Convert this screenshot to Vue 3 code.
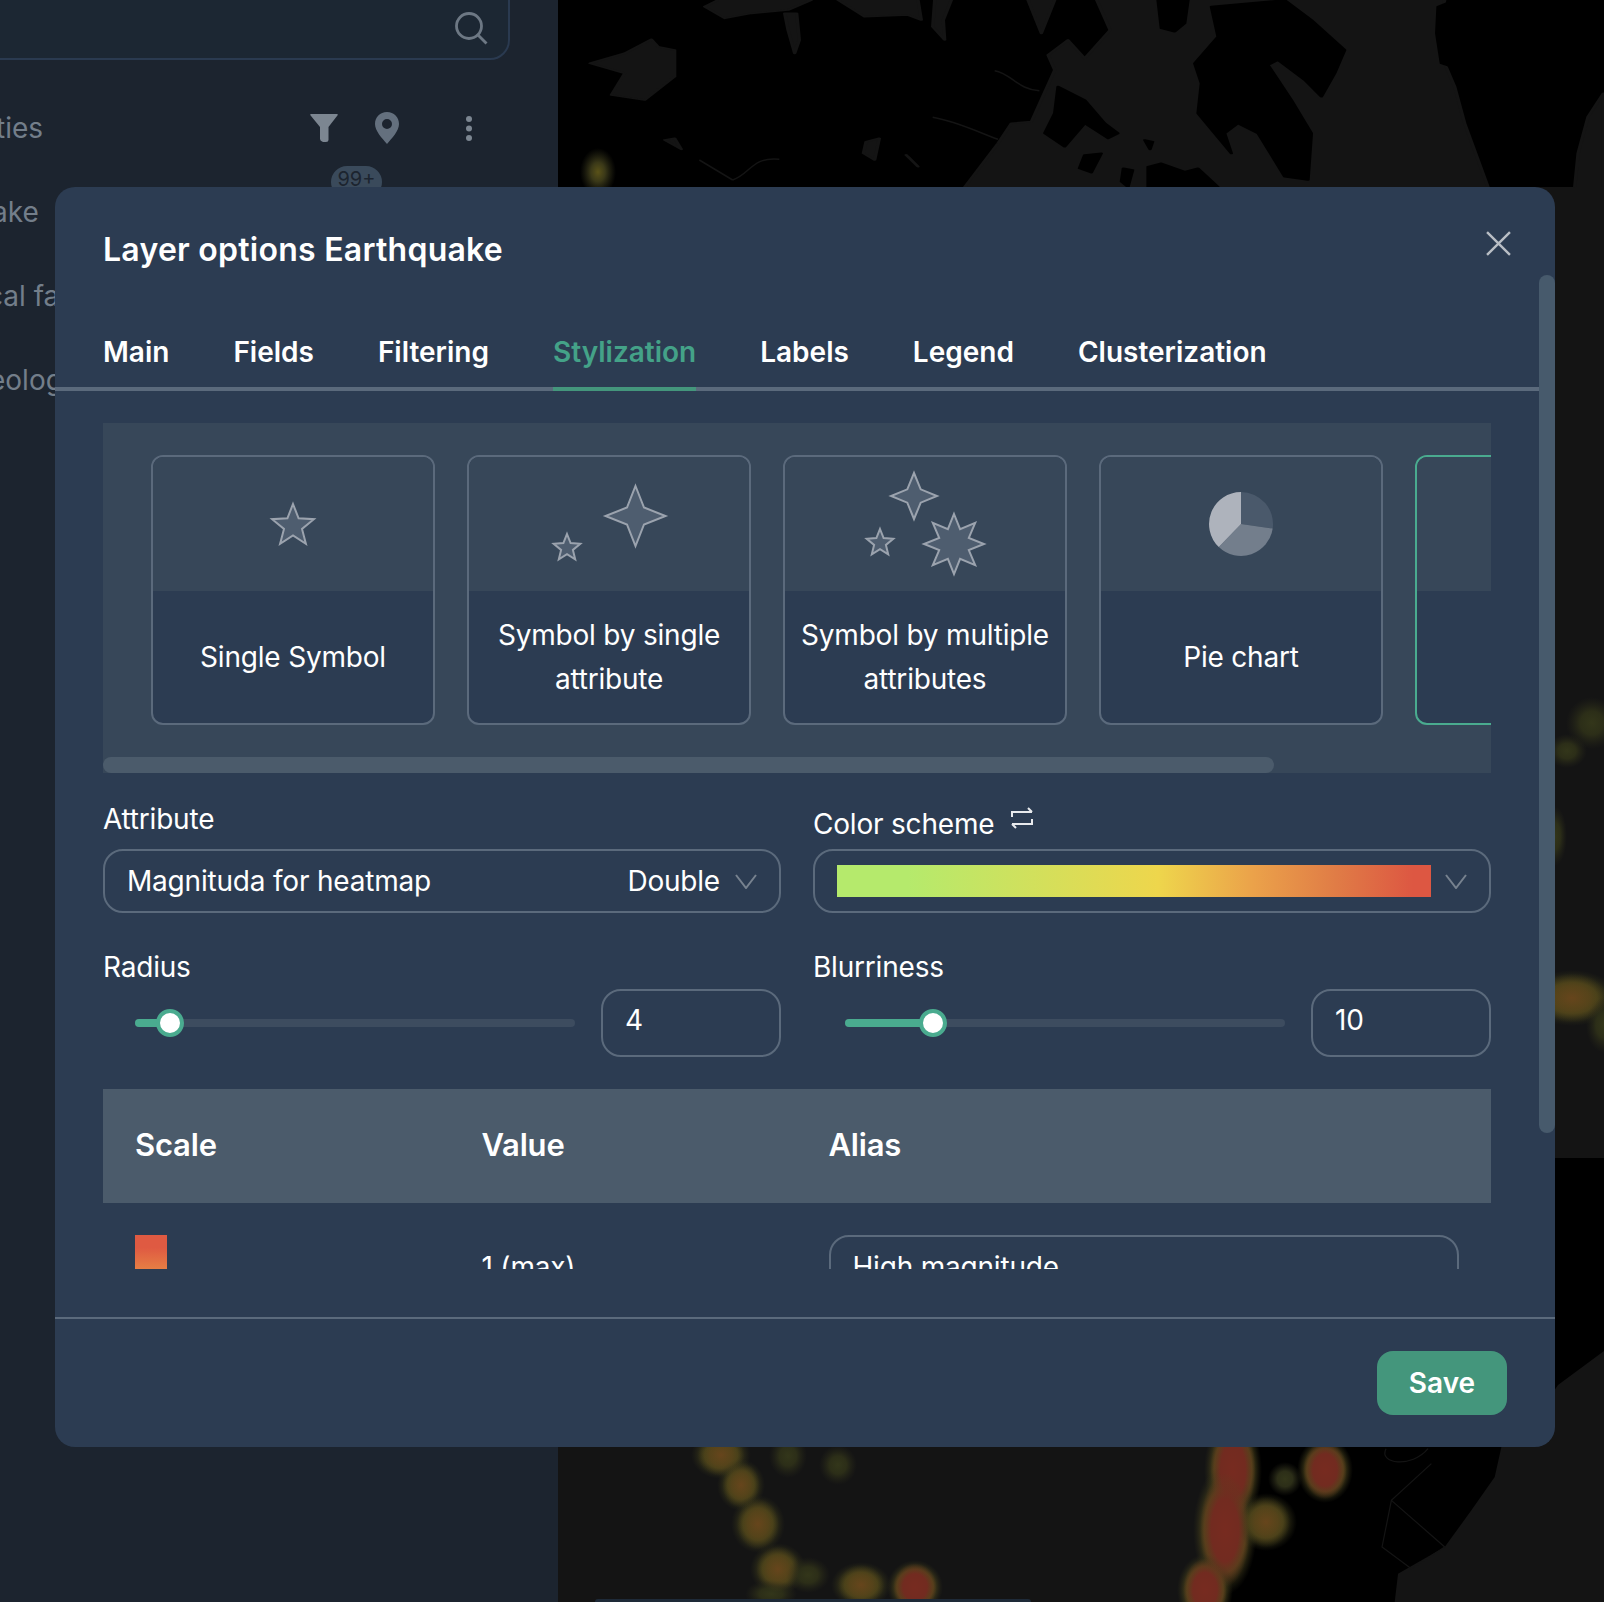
<script setup>
const sideRows = [
  { text: 'ties', shift: -4 },
  { text: 'ake', shift: -8 },
  { text: 'cal fa', shift: -13 },
  { text: 'eology', shift: -11 },
];
const tabs = ['Main', 'Fields', 'Filtering', 'Stylization', 'Labels', 'Legend', 'Clusterization'];

function star(cx, cy, outer, inner, count) {
  const points = [];
  for (let i = 0; i < count * 2; i += 1) {
    const radius = i % 2 === 0 ? outer : inner;
    const angle = (Math.PI * i) / count - Math.PI / 2;
    points.push(`${(cx + radius * Math.cos(angle)).toFixed(1)},${(cy + radius * Math.sin(angle)).toFixed(1)}`);
  }
  return points.join(' ');
}

function slice(cx, cy, radius, from, to) {
  const point = (deg) => {
    const a = ((deg - 90) * Math.PI) / 180;
    return `${(cx + radius * Math.cos(a)).toFixed(1)} ${(cy + radius * Math.sin(a)).toFixed(1)}`;
  };
  const large = to - from > 180 ? 1 : 0;
  return `M${cx} ${cy}L${point(from)}A${radius} ${radius} 0 ${large} 1 ${point(to)}Z`;
}

const cards = [
  { label: 'Single Symbol', stars: [star(139, 69, 22, 9.5, 5)] },
  { label: 'Symbol by single attribute', stars: [star(165.5, 59, 30, 12, 4), star(97, 91, 14, 6.2, 5)] },
  { label: 'Symbol by multiple attributes', stars: [star(128, 39, 23, 9.5, 4), star(94, 86, 14, 6.2, 5), star(168, 87, 30, 16, 8)] },
  {
    label: 'Pie chart',
    pie: [
      { d: slice(139, 67, 32, 0, 98), fill: '#4a596b' },
      { d: slice(139, 67, 32, 98, 224), fill: '#737e8c' },
      { d: slice(139, 67, 32, 224, 360), fill: '#aeb3bc' },
    ],
  },
  { label: '', active: true },
];

const sliders = [
  { label: 'Radius', value: '4', fill: 8 },
  { label: 'Blurriness', value: '10', fill: 20 },
];

// heat spots, in map pixels
const heat = [
  { x: 40, y: 172, rx: 18, ry: 24, level: 'low' },
  { x: 1014, y: 998, rx: 46, ry: 28, level: 'mid' },
  { x: 1009, y: 751, rx: 20, ry: 17, level: 'dim' },
  { x: 1034, y: 723, rx: 26, ry: 26, level: 'dim' },
  { x: 997, y: 836, rx: 12, ry: 30, level: 'dim' },
  { x: 1046, y: 1025, rx: 18, ry: 28, level: 'dim' },
  { x: 163, y: 1455, rx: 30, ry: 24, level: 'mid' },
  { x: 183, y: 1485, rx: 24, ry: 26, level: 'mid' },
  { x: 200, y: 1524, rx: 27, ry: 29, level: 'mid' },
  { x: 220, y: 1569, rx: 28, ry: 26, level: 'mid' },
  { x: 250, y: 1575, rx: 22, ry: 18, level: 'dim' },
  { x: 230, y: 1456, rx: 19, ry: 22, level: 'dim' },
  { x: 280, y: 1465, rx: 19, ry: 20, level: 'dim' },
  { x: 213, y: 1594, rx: 26, ry: 14, level: 'dim' },
  { x: 303, y: 1585, rx: 30, ry: 23, level: 'mid' },
  { x: 357, y: 1587, rx: 28, ry: 27, level: 'hot' },
  { x: 675, y: 1470, rx: 29, ry: 55, level: 'hot' },
  { x: 667, y: 1530, rx: 32, ry: 65, level: 'hot' },
  { x: 647, y: 1590, rx: 28, ry: 36, level: 'hot' },
  { x: 767, y: 1470, rx: 28, ry: 33, level: 'hot' },
  { x: 727, y: 1479, rx: 17, ry: 17, level: 'dim' },
  { x: 708, y: 1522, rx: 31, ry: 29, level: 'mid' },
];

// map is drawn in a 1568x561 box for the top strip and the bottom one
const topGray = [
  'M610 561L660 430L680 370L710 365L745 210L735 165L765 120L790 175L828 90L808 0H1330L1320 100L1330 190L1345 260L1360 370L1395 561Z',
  'M48 190L100 160L140 118L150 140L175 150L175 230L130 300L80 285L100 220Z',
  'M220 20L240 0H380L345 30L290 40L250 55Z',
  'M340 40L358 40L362 120L355 160L345 90Z',
  'M420 0H540L545 60L525 45L460 50Z',
  'M565 0H590L578 60L580 120L562 80Z',
  'M705 0H745L725 100Z',
  'M462 425L482 415L475 480L458 460Z',
  'M160 420L175 415L185 448Z',
  'M1568 280L1545 350L1530 460L1525 561H1568Z',
  'M525 470L540 500L522 465Z',
];
const topBlack = [
  'M900 0H945L940 70L925 95L905 85Z',
  'M980 20L1090 0L1130 60L1180 150L1165 220L1145 290L1120 240L1080 180L1065 195L1100 300L1130 400L1125 540L1090 530L1050 400L1020 370L1000 400L1010 460L960 340L965 250L955 190L990 110Z',
  'M750 260L790 300L820 370L840 400L825 415L790 370L760 440L730 400L745 340Z',
  'M885 500L905 490L940 515L960 505L990 561H885Z',
  'M790 465L815 460L800 518L782 505Z',
  'M848 505L862 510L855 561L845 545Z',
  'M880 420L892 425L888 448Z',
  'M1320 20L1345 0H1360L1350 50L1375 70L1340 200L1325 190L1318 100Z',
];
const topLines = [
  'M655 212C680 220 690 270 722 272',
  'M562 352C600 365 640 405 660 418',
  'M212 480L262 540M262 540C290 520 290 470 332 478',
];
const bottomLines = [
  'M1242 5C1230 50 1280 65 1305 5',
  'M1310 50L1250 160L1236 300L1280 365L1330 300L1250 160',
];
</script>

<template>
  <div class="page">
    <aside class="side">
      <div class="side__search">
        <svg class="side__search-icon" viewBox="0 0 34 34" width="34" height="34" aria-hidden="true">
          <circle cx="15" cy="15" r="12.5" fill="none" stroke="#6d7884" stroke-width="2.8" />
          <path d="M24 24L32.5 32.5" stroke="#6d7884" stroke-width="2.8" fill="none" />
        </svg>
      </div>
      <div v-for="(row, index) in sideRows" :key="row.text" class="side__row">
        <span :style="{ marginLeft: `${row.shift}px` }">{{ row.text }}</span>
        <div v-if="index === 0" class="side__tools">
          <svg viewBox="0 0 28 28" width="28" height="28" aria-hidden="true">
            <path d="M1 0H27Q28.4 0 27.6 1.2L18.5 13V26Q18.5 28 16 28H13Q10 27 10 25V13L0.4 1.2Q-0.4 0 1 0Z" fill="#7c8691" />
          </svg>
          <svg viewBox="0 0 24 32" width="24" height="32" aria-hidden="true">
            <path fill-rule="evenodd" d="M12 0C5 0 0 5 0 12C0 19 7 26 12 32C17 26 24 19 24 12C24 5 19 0 12 0ZM12 7A5 5 0 1 1 12 17A5 5 0 1 1 12 7Z" fill="#64707e" />
          </svg>
          <svg viewBox="0 0 6 25" width="6" height="25" aria-hidden="true">
            <circle cx="3" cy="3" r="3" fill="#7c8691" />
            <circle cx="3" cy="12.5" r="3" fill="#7c8691" />
            <circle cx="3" cy="22" r="3" fill="#7c8691" />
          </svg>
        </div>
      </div>
      <span class="side__badge">99+</span>
    </aside>

    <svg class="map" viewBox="0 0 1046 1602" aria-hidden="true">
      <defs>
        <radialGradient id="halo-low">
          <stop offset="0" stop-color="#5a5218" />
          <stop offset="0.4" stop-color="#3a3818" />
          <stop offset="1" stop-color="#2a2a18" stop-opacity="0" />
        </radialGradient>
        <radialGradient id="halo-dim">
          <stop offset="0" stop-color="#33361a" />
          <stop offset="0.45" stop-color="#2c2e18" />
          <stop offset="1" stop-color="#242418" stop-opacity="0" />
        </radialGradient>
        <radialGradient id="halo-mid">
          <stop offset="0" stop-color="#48441a" />
          <stop offset="0.55" stop-color="#423f19" />
          <stop offset="1" stop-color="#2a2a18" stop-opacity="0" />
        </radialGradient>
        <radialGradient id="halo-hot">
          <stop offset="0" stop-color="#55461b" />
          <stop offset="0.65" stop-color="#4e441a" />
          <stop offset="1" stop-color="#2a2a18" stop-opacity="0" />
        </radialGradient>
        <radialGradient id="core-mid">
          <stop offset="0" stop-color="#6a451c" stop-opacity="0.9" />
          <stop offset="0.5" stop-color="#62461b" stop-opacity="0.6" />
          <stop offset="1" stop-color="#4e441a" stop-opacity="0" />
        </radialGradient>
        <radialGradient id="core-hot">
          <stop offset="0" stop-color="#772b20" />
          <stop offset="0.55" stop-color="#722b20" />
          <stop offset="1" stop-color="#633a1e" stop-opacity="0" />
        </radialGradient>
      </defs>
      <rect width="1046" height="1602" fill="#141414" />
      <rect width="1046" height="187" fill="#000" />
      <path d="M960 1158H1046V1351L1000 1385L985 1407H960Z" fill="#000" />
      <g transform="scale(0.6667 0.3333)" stroke-linejoin="round">
        <path v-for="d in topGray" :key="d" :d="d" fill="#141414" stroke="#141414" stroke-width="5" />
        <path v-for="d in topBlack" :key="d" :d="d" fill="#000" stroke="#000" stroke-width="5" />
        <path v-for="d in topLines" :key="d" :d="d" fill="none" stroke="#141414" stroke-width="1.5" vector-effect="non-scaling-stroke" />
      </g>
      <g transform="translate(0 1447) scale(0.6667 0.3333)">
        <path d="M1000 0H1415L1405 90L1370 190L1330 300L1260 380L1255 465H950L1000 250Z" fill="#000" />
        <path v-for="d in bottomLines" :key="d" :d="d" fill="none" stroke="#141414" stroke-width="1.2" vector-effect="non-scaling-stroke" />
      </g>
      <ellipse
        v-for="blob in heat"
        :key="`halo-${blob.x}-${blob.y}`"
        :cx="blob.x"
        :cy="blob.y"
        :rx="blob.rx"
        :ry="blob.ry"
        :fill="`url(#halo-${blob.level})`"
      />
      <template v-for="blob in heat" :key="`core-${blob.x}-${blob.y}`">
        <ellipse
          v-if="blob.level === 'mid' || blob.level === 'hot'"
          :cx="blob.x"
          :cy="blob.y"
          :rx="blob.rx * 0.78"
          :ry="blob.ry * 0.88"
          :fill="`url(#core-${blob.level})`"
        />
      </template>
      <rect x="37" y="1599" width="436" height="6" rx="3" fill="#1e2a38" />
    </svg>

    <section class="modal">
      <h2 class="modal__title">Layer options Earthquake</h2>
      <svg class="modal__close" viewBox="0 0 24 24" width="25" height="25" aria-hidden="true">
        <path d="M1 1L23 23M23 1L1 23" stroke="#b9bec5" stroke-width="2.3" fill="none" />
      </svg>

      <nav class="tabs">
        <span v-for="tab in tabs" :key="tab" class="tabs__item" :class="{ 'tabs__item--active': tab === 'Stylization' }">{{ tab }}</span>
      </nav>

      <span class="modal__scroll" />

      <div class="modal__body">
        <div class="kinds">
          <div class="kinds__row">
            <article v-for="card in cards" :key="card.label" class="kind" :class="{ 'kind--active': card.active }">
              <div class="kind__art">
                <svg v-if="!card.active" viewBox="-1 0 280 134" width="280" height="134" aria-hidden="true">
                  <polygon
                    v-for="points in card.stars"
                    :key="points"
                    :points="points"
                    fill="#4e5d6f"
                    stroke="#9ba3ae"
                    stroke-width="2"
                  />
                  <path v-for="part in card.pie" :key="part.d" :d="part.d" :fill="part.fill" />
                </svg>
              </div>
              <p class="kind__label">{{ card.label }}</p>
            </article>
          </div>
          <span class="kinds__scroll" />
        </div>

        <div class="fields">
          <div class="field">
            <label class="field__label">Attribute</label>
            <div class="select">
              <span>Magnituda for heatmap</span>
              <span class="select__type">Double</span>
              <svg viewBox="0 0 22 15" width="22" height="15" aria-hidden="true">
                <path d="M1 1L11 14L21 1" fill="none" stroke="#77828f" stroke-width="2" />
              </svg>
            </div>
          </div>
          <div class="field">
            <label class="field__label field__label--icon">
              Color scheme
              <svg viewBox="0 0 24 22" width="24" height="22" aria-hidden="true">
                <path d="M2 10V5H22M18 1L22 5M22 12V17H2M6 21L2 17" fill="none" stroke="#e8eaed" stroke-width="2" />
              </svg>
            </label>
            <div class="select select--scheme">
              <span class="select__ramp" />
              <svg viewBox="0 0 22 15" width="22" height="15" aria-hidden="true">
                <path d="M1 1L11 14L21 1" fill="none" stroke="#77828f" stroke-width="2" />
              </svg>
            </div>
          </div>
          <div v-for="item in sliders" :key="item.label" class="field field--slider">
            <label class="field__label field__label--slider">{{ item.label }}</label>
            <div class="range">
              <div class="range__track">
                <span class="range__fill" :style="{ width: `${item.fill}%` }" />
                <span class="range__thumb" :style="{ left: `${item.fill}%` }" />
              </div>
              <div class="range__input">{{ item.value }}</div>
            </div>
          </div>
        </div>

        <div class="scale">
          <div class="scale__head">
            <span>Scale</span>
            <span>Value</span>
            <span>Alias</span>
          </div>
          <div class="scale__row">
            <span class="scale__swatch" />
            <span class="scale__value">1 (max)</span>
            <div class="scale__input">High magnitude</div>
          </div>
        </div>
      </div>

      <footer class="modal__footer">
        <button class="modal__save" type="button">Save</button>
      </footer>
    </section>
  </div>
</template>

<style>
body {
  background: #141414;
}
</style>

<style scoped>
.page {
  position: relative;
  display: flex;
  width: 1604px;
  height: 1602px;
  overflow: hidden;
  font-family: Inter, "Noto Sans", sans-serif;
  color: #ffffff;
}

.side {
  position: relative;
  flex: 0 0 558px;
  box-sizing: border-box;
  background: #1c242f;
  color: #737e8a;
  font-size: 28px;
  overflow: hidden;
}

.side__search {
  display: flex;
  align-items: center;
  justify-content: flex-end;
  box-sizing: border-box;
  width: 530px;
  height: 81px;
  margin: -21px 0 26px -20px;
  padding-top: 17px;
  padding-right: 20px;
  background: #1c2733;
  border: 2px solid #2a3a50;
  border-radius: 20px;
}

.side__row {
  display: flex;
  align-items: center;
  justify-content: space-between;
  height: 84px;
  padding-right: 86px;
}

.side__tools {
  display: flex;
  align-items: center;
  gap: 37px;
}

.side__tools svg:last-child {
  margin-left: 30px;
}

.side__badge {
  position: absolute;
  left: 331px;
  top: 166px;
  width: 51px;
  height: 32px;
  background: #3a4a5b;
  border-radius: 16px;
  color: #1c242f;
  font-size: 20px;
  line-height: 26px;
  text-align: center;
}

.map {
  flex: 0 0 1046px;
  width: 1046px;
  height: 1602px;
}

.modal {
  position: absolute;
  left: 55px;
  top: 187px;
  display: flex;
  flex-direction: column;
  box-sizing: border-box;
  width: 1500px;
  height: 1260px;
  padding-top: 43px;
  background: #2c3c52;
  border-radius: 20px;
}

.modal__title {
  margin: 0 0 62px 48px;
  font-size: 32px;
  line-height: 40px;
  font-weight: 600;
  letter-spacing: 0.25px;
}

.modal__close {
  position: absolute;
  right: 44px;
  top: 44px;
}

.modal__scroll {
  position: absolute;
  right: 0;
  top: 88px;
  width: 16px;
  height: 858px;
  background: #475a6c;
  border-radius: 8px;
}

.tabs {
  display: flex;
  gap: 64px;
  height: 55px;
  margin-right: 16px;
  padding-left: 48px;
  border-bottom: 4px solid #5b6a7c;
}

.tabs__item {
  height: 55px;
  font-size: 28px;
  line-height: 40px;
  font-weight: 600;
}

.tabs__item--active {
  color: #44a288;
  border-bottom: 4px solid #44967c;
}

.modal__body {
  flex: 1;
  min-height: 0;
  margin-bottom: 48px;
  padding: 32px 64px 0 48px;
  overflow: hidden;
  letter-spacing: -0.2px;
}

.kinds {
  height: 350px;
  background: #374759;
  overflow: hidden;
}

.kinds__row {
  display: flex;
  gap: 32px;
  padding: 32px 0 32px 48px;
}

.kind {
  flex: 0 0 284px;
  box-sizing: border-box;
  height: 270px;
  background: #2c3c52;
  border: 2px solid #5b6a7c;
  border-radius: 12px;
  overflow: hidden;
}

.kind--active {
  border-color: #4aab8f;
}

.kind__art {
  height: 134px;
  background: #374759;
}

.kind__art svg {
  display: block;
}

.kind__label {
  display: flex;
  align-items: center;
  justify-content: center;
  box-sizing: border-box;
  height: 132px;
  margin: 0;
  font-size: 28px;
  line-height: 44px;
  text-align: center;
}

.kinds__scroll {
  display: block;
  width: 1171px;
  height: 16px;
  background: #4b5b6b;
  border-radius: 8px;
}

.fields {
  display: grid;
  grid-template-columns: 1fr 1fr;
  column-gap: 32px;
  padding-top: 30px;
}

.field__label {
  display: flex;
  align-items: center;
  gap: 16px;
  height: 32px;
  margin-bottom: 14px;
  font-size: 28px;
  line-height: 32px;
}

.field__label--icon {
  position: relative;
  top: 5px;
}

.field__label--icon svg {
  position: relative;
  top: -6px;
}

.field__label--slider {
  margin-top: 38px;
  margin-bottom: 6px;
}

.select {
  display: flex;
  align-items: center;
  box-sizing: border-box;
  height: 64px;
  padding: 0 22px;
  border: 2px solid #5b6a7c;
  border-radius: 20px;
  font-size: 28px;
}

.select__type {
  margin-left: auto;
  margin-right: 15px;
}

.select--scheme {
  justify-content: space-between;
}

.select__ramp {
  width: 594px;
  height: 32px;
  background: linear-gradient(90deg, #b5ea6c 12%, #eed64c 54%, #eba24a 70%, #e07c46 84%, #dd5742 97%);
}

.range {
  display: flex;
  align-items: center;
}

.range__track {
  position: relative;
  flex: 0 0 440px;
  height: 8px;
  margin-left: 32px;
  background: #3d4c5f;
  border-radius: 4px;
}

.range__fill {
  display: block;
  height: 100%;
  background: #4aab8f;
  border-radius: 4px;
}

.range__thumb {
  position: absolute;
  top: 50%;
  box-sizing: border-box;
  width: 28px;
  height: 28px;
  background: #ffffff;
  border: 4px solid #4aab8f;
  border-radius: 50%;
  transform: translate(-50%, -50%);
}

.range__input {
  box-sizing: border-box;
  flex: 0 0 180px;
  height: 68px;
  margin-left: auto;
  padding: 0 22px;
  border: 2px solid #5b6a7c;
  border-radius: 20px;
  font-size: 28px;
  line-height: 58px;
}

.scale {
  margin-top: 32px;
}

.scale__head,
.scale__row {
  display: grid;
  grid-template-columns: 346.5px 347px 1fr;
  padding-left: 32px;
}

.scale__head {
  align-items: center;
  box-sizing: border-box;
  height: 114px;
  padding-bottom: 4px;
  background: #4b5b6b;
  font-size: 31px;
  font-weight: 600;
}

.scale__row {
  align-items: center;
  padding-top: 32px;
  padding-right: 32px;
  font-size: 28px;
}

.scale__swatch {
  width: 32px;
  height: 64px;
  background: linear-gradient(180deg, #df5a42 20%, #e78044 55%);
}

.scale__input {
  box-sizing: border-box;
  height: 64px;
  padding: 0 22px;
  border: 2px solid #5b6a7c;
  border-radius: 20px;
  line-height: 60px;
}

.modal__footer {
  display: flex;
  align-items: center;
  justify-content: flex-end;
  flex: 0 0 130px;
  box-sizing: border-box;
  padding-right: 48px;
  border-top: 2px solid #5b6a7c;
}

.modal__save {
  width: 130px;
  height: 64px;
  background: #44967c;
  border: 0;
  border-radius: 16px;
  color: #ffffff;
  font-family: inherit;
  font-size: 28px;
  font-weight: 600;
}
</style>
